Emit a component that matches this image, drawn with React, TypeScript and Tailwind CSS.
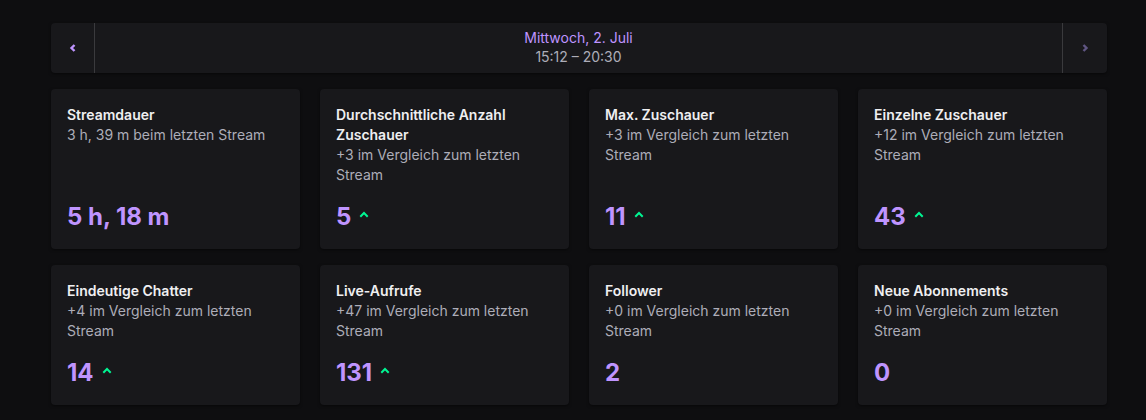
import React from "react";

type Card = { title: string; sub: string; value: string; up?: boolean };

const row1: Card[] = [
  { title: "Streamdauer", sub: "3 h, 39 m beim letzten Stream", value: "5 h, 18 m" },
  { title: "Durchschnittliche Anzahl Zuschauer", sub: "+3 im Vergleich zum letzten Stream", value: "5", up: true },
  { title: "Max. Zuschauer", sub: "+3 im Vergleich zum letzten Stream", value: "11", up: true },
  { title: "Einzelne Zuschauer", sub: "+12 im Vergleich zum letzten Stream", value: "43", up: true },
];
const row2: Card[] = [
  { title: "Eindeutige Chatter", sub: "+4 im Vergleich zum letzten Stream", value: "14", up: true },
  { title: "Live-Aufrufe", sub: "+47 im Vergleich zum letzten Stream", value: "131", up: true },
  { title: "Follower", sub: "+0 im Vergleich zum letzten Stream", value: "2" },
  { title: "Neue Abonnements", sub: "+0 im Vergleich zum letzten Stream", value: "0" },
];

function Up() {
  return (
    <svg width="10" height="8" viewBox="0 0 10 8" className="ml-2 mb-[6px]">
      <path d="M2 6 L5 3 L8 6" fill="none" stroke="#00f593" strokeWidth="2" strokeLinecap="square" />
    </svg>
  );
}

function StatCard({ c }: { c: Card }) {
  return (
    <div className="flex flex-col rounded bg-[#18181b] px-4 pt-4 pb-4 shadow-[0_1px_3px_rgba(0,0,0,0.5)]">
      <div className="text-sm leading-5 font-semibold text-[#efeff1]">{c.title}</div>
      <div className="text-sm leading-5 text-[#adadb8]">{c.sub}</div>
      <div className="mt-auto pt-4 flex items-center">
        <span className="text-2xl leading-8 font-bold text-[#bf94ff]">{c.value}</span>
        {c.up && <Up />}
      </div>
    </div>
  );
}

export default function App() {
  return (
    <div
      className="min-h-[420px] w-full bg-[#0e0e10] pt-[23px] pl-[51px] pr-[39px]"
      style={{ fontFamily: "Inter, 'Noto Sans', sans-serif" }}
    >
      <div className="flex h-[50px] w-[1056px] rounded-sm bg-[#18181b] shadow-[0_1px_3px_rgba(0,0,0,0.5)]">
        <div className="flex w-[44px] items-center justify-center border-r border-[#3a3a3d]">
          <svg width="8" height="10" viewBox="0 0 8 10">
            <path d="M5.5 2 L2.5 5 L5.5 8" fill="none" stroke="#bf94ff" strokeWidth="2.4" />
          </svg>
        </div>
        <div className="flex flex-1 flex-col items-center justify-center pb-[2px] text-sm leading-[19px]">
          <div className="text-[#bf94ff]">Mittwoch, 2. Juli</div>
          <div className="text-[#adadb8]">15:12 – 20:30</div>
        </div>
        <div className="flex w-[45px] items-center justify-center border-l border-[#3a3a3d]">
          <svg width="8" height="10" viewBox="0 0 8 10">
            <path d="M2.5 2 L5.5 5 L2.5 8" fill="none" stroke="#5f5582" strokeWidth="2.4" />
          </svg>
        </div>
      </div>
      <div className="mt-4 grid w-[1056px] grid-cols-4 gap-x-5 gap-y-4">
        {row1.map((c) => (
          <StatCard key={c.title} c={c} />
        ))}
        {row2.map((c) => (
          <StatCard key={c.title} c={c} />
        ))}
      </div>
    </div>
  );
}
